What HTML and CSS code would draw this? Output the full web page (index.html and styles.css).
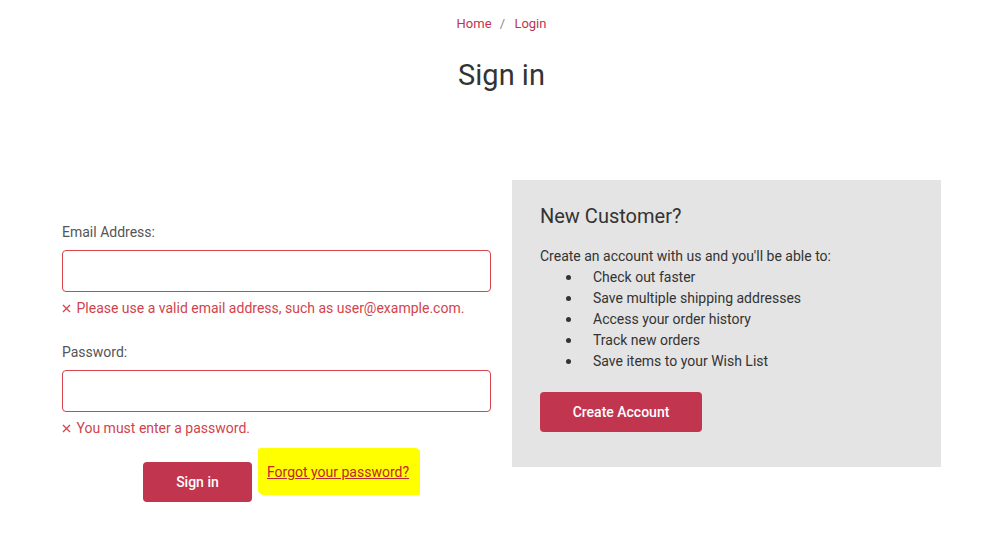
FILE: index.html
```html
<!DOCTYPE html>
<html lang="en">
<head>
    <meta charset="UTF-8">
    <meta name="viewport" content="width=device-width, initial-scale=1.0">
    <title>Sign in</title>
    <link rel="stylesheet" href="styles.css">
</head>
<body>

    <nav class="breadcrumb">
        <a href="#">Home</a>
        <span class="sep">/</span>
        <a href="#">Login</a>
    </nav>

    <h1 class="page-title">Sign in</h1>

    <div class="login-wrap">
        <form class="login-form">
            <label class="field-label" for="email">Email Address:</label>
            <input class="field-input" type="email" id="email">
            <div class="field-error">
                <svg width="9" height="9" viewBox="0 0 9 9"><path d="M1 1L8 8M8 1L1 8" stroke="#d2434c" stroke-width="1.3"/></svg>
                Please use a valid email address, such as user@example.com.
            </div>

            <label class="field-label" for="password">Password:</label>
            <input class="field-input" type="password" id="password">
            <div class="field-error">
                <svg width="9" height="9" viewBox="0 0 9 9"><path d="M1 1L8 8M8 1L1 8" stroke="#d2434c" stroke-width="1.3"/></svg>
                You must enter a password.
            </div>

            <div class="form-actions">
                <button class="btn" type="button">Sign in</button>
                <span class="highlight"><a href="#" class="forgot">Forgot your password?</a></span>
            </div>
        </form>

        <div class="new-customer">
            <h2>New Customer?</h2>
            <p>Create an account with us and you'll be able to:</p>
            <ul>
                <li>Check out faster</li>
                <li>Save multiple shipping addresses</li>
                <li>Access your order history</li>
                <li>Track new orders</li>
                <li>Save items to your Wish List</li>
            </ul>
            <button class="btn btn-wide" type="button">Create Account</button>
        </div>
    </div>

</body>
</html>
```

FILE: styles.css
```css
body {
    margin: 0;
    background-color: #fff;
    color: #333;
    font-family: Roboto, "Liberation Sans", sans-serif;
    font-size: 14px;
}
.breadcrumb {
    padding: 15px 0 0 14px;
    text-align: center;
    font-size: 13px;
    line-height: 18px;
}
.breadcrumb a {
    color: #c2334f;
    text-decoration: none;
}
.breadcrumb .sep {
    color: #888;
    margin: 0 6px 0 5px;
}
.page-title {
    margin: 25px 0 0;
    padding-left: 14px;
    text-align: center;
    font-size: 29px;
    line-height: 34px;
    font-weight: 400;
    color: #333;
}
.login-wrap {
    display: grid;
    grid-template-columns: 429px 429px;
    column-gap: 21px;
    align-items: start;
    margin: 88px 0 0 62px;
}
.login-form {
    display: flex;
    flex-direction: column;
    padding-top: 42px;
}
.field-label {
    color: #555;
    line-height: 20px;
    margin-bottom: 8px;
}
.field-input {
    box-sizing: border-box;
    height: 42px;
    width: 100%;
    border: 1px solid #d6434b;
    border-radius: 4px;
    padding: 0 10px;
    font: inherit;
}
.field-error {
    margin-top: 6px;
    margin-bottom: 24px;
    color: #d2434c;
    line-height: 20px;
}
.field-error svg {
    margin-right: 2px;
    vertical-align: 0;
}
.form-actions {
    display: flex;
    justify-content: center;
    align-items: flex-start;
    gap: 6px;
    margin-top: -14px;
    margin-left: 10px;
}
.btn {
    height: 40px;
    border: none;
    border-radius: 4px;
    background-color: #c1354f;
    color: #fff;
    font-family: inherit;
    font-size: 14px;
    font-weight: 500;
    padding: 0 24px;
    cursor: pointer;
}
.form-actions .btn {
    width: 109px;
    margin-top: 14px;
}
.highlight {
    display: inline-block;
    background-color: #ffff00;
    padding: 14px 11px 13px 9px;
    line-height: 20px;
    border-radius: 3px 5px 2px 6px / 2px 4px 3px 5px;
}
.forgot {
    color: #c0262f;
    text-decoration: underline;
}
.new-customer {
    background-color: #e4e4e4;
    padding: 24px 28px 35px;
}
.new-customer h2 {
    margin: 0 0 18px;
    font-size: 20px;
    line-height: 24px;
    font-weight: 400;
    color: #333;
}
.new-customer p {
    margin: 0;
    line-height: 21px;
}
.new-customer ul {
    list-style: none;
    margin: 0;
    padding: 0;
}
.new-customer li {
    line-height: 21px;
}
.new-customer li::before {
    content: "";
    display: inline-block;
    width: 5px;
    height: 5px;
    border-radius: 50%;
    background-color: #333;
    margin: 0 22px 0 26px;
    vertical-align: 2px;
}
.btn-wide {
    width: 162px;
    margin-top: 20px;
}
```
